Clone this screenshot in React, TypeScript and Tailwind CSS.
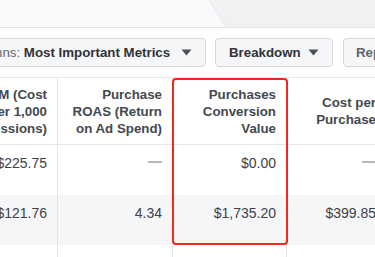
function Caret() {
  return (
    <svg width="11" height="7" viewBox="0 0 11 7" className="shrink-0">
      <path d="M0.5 0.5 L10.5 0.5 L5.5 6.5 Z" fill="#4b4f56" />
    </svg>
  );
}

const HEADERS = [
  ["CPM (Cost", "per 1,000", "Impressions)"],
  ["Purchase", "ROAS (Return", "on Ad Spend)"],
  ["Purchases", "Conversion", "Value"],
  ["Cost per", "Purchase"],
];

const ROWS = [
  { bg: "bg-white", cells: ["$225.75", "—", "$0.00", "—"] },
  { bg: "bg-[#f5f6f7]", cells: ["$121.76", "4.34", "$1,735.20", "$399.85"] },
  { bg: "bg-white", cells: ["$98.12", "—", "$0.00", "—"] },
];

export default function App() {
  return (
    <div className="w-[375px] h-[257px] overflow-hidden bg-white font-['Liberation_Sans',Arial,sans-serif]">
      {/* tab strip */}
      <div className="flex h-[28px] border-b border-[#dfe1e5]">
        <div className="w-[209px] bg-[#f9fafb]" />
        <svg width="17" height="27" viewBox="0 0 17 27" className="shrink-0">
          <rect width="17" height="27" fill="#f9fafb" />
          <path d="M0 0 L17 27 L17 0 Z" fill="#f0f1f3" />
          <path d="M0 0 L17 27" stroke="#e6e8eb" strokeWidth="1" />
        </svg>
        <div className="flex-1 bg-[#f0f1f3]" />
      </div>

      {/* toolbar */}
      <div className="flex items-center gap-[9px] pt-[10px] pb-[10px] overflow-hidden">
        <button className="ml-[-49px] w-[255px] h-[29px] shrink-0 flex items-center justify-between pl-[12px] pr-[13px] bg-[#f5f6f7] border border-[#d5d8dc] rounded-[4px] text-[13.3px] whitespace-nowrap">
          <span>
            <span className="text-[#606770]">Columns: </span>
            <span className="font-bold text-[#303338]">Most Important Metrics</span>
          </span>
          <Caret />
        </button>
        <button className="h-[29px] w-[118px] shrink-0 flex items-center justify-between pl-[13px] pr-[13px] bg-[#f5f6f7] border border-[#d5d8dc] rounded-[4px] text-[13.3px] font-bold text-[#303338]">
          <span>Breakdown</span>
          <Caret />
        </button>
        <button className="h-[29px] shrink-0 ml-px flex items-center gap-[12px] pl-[12px] pr-[13px] bg-[#f5f6f7] border border-[#d5d8dc] rounded-[4px] text-[13.3px] font-bold text-[#606770]">
          <span>Reports</span>
          <Caret />
        </button>
      </div>

      {/* table */}
      <div className="relative border-t border-[#e4e6ea]">
        <div className="ml-[-58px] grid grid-cols-[116px_115px_114px_100px] h-[67px] border-b border-[#e4e6ea]">
          {HEADERS.map((lines, i) => (
            <div
              key={i}
              className="flex flex-col items-end justify-center pr-[10px] border-r border-[#e4e6ea] text-[13.3px] leading-[17px] font-bold text-[#444950] text-right whitespace-nowrap"
            >
              {lines.map((l) => (
                <span key={l}>{l}</span>
              ))}
            </div>
          ))}
        </div>
        {ROWS.map((row, r) => (
          <div key={r} className={`ml-[-58px] grid grid-cols-[116px_115px_114px_100px] h-[50px] ${row.bg}`}>
            {row.cells.map((c, i) => (
              <div
                key={i}
                className="pt-[10px] pr-[10px] border-r border-[#e4e6ea] text-right text-[14px] leading-[17px] whitespace-nowrap text-[#3e4248]"
              >
                {c === "—" ? (
                  <span className="inline-block w-[14px] h-[2px] mb-[4px] align-middle bg-[#b4b8bd]" aria-label="—" />
                ) : (
                  c
                )}
              </div>
            ))}
          </div>
        ))}

        {/* highlight */}
        <div className="absolute left-[172px] top-0 w-[116px] h-[167px] border-2 border-[#f3271c] rounded-[4px] pointer-events-none" />
      </div>
    </div>
  );
}
